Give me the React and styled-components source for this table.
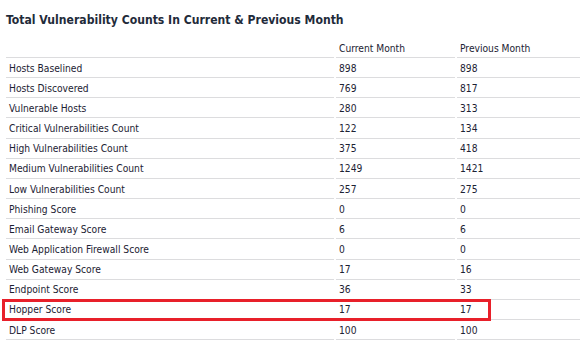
import styled, { createGlobalStyle } from "styled-components";

const rows = [
  ["Hosts Baselined", "898", "898"],
  ["Hosts Discovered", "769", "817"],
  ["Vulnerable Hosts", "280", "313"],
  ["Critical Vulnerabilities Count", "122", "134"],
  ["High Vulnerabilities Count", "375", "418"],
  ["Medium Vulnerabilities Count", "1249", "1421"],
  ["Low Vulnerabilities Count", "257", "275"],
  ["Phishing Score", "0", "0"],
  ["Email Gateway Score", "6", "6"],
  ["Web Application Firewall Score", "0", "0"],
  ["Web Gateway Score", "17", "16"],
  ["Endpoint Score", "36", "33"],
  ["Hopper Score", "17", "17"],
  ["DLP Score", "100", "100"],
];

const GlobalStyle = createGlobalStyle`
  body {
    margin: 0;
    background: #fff;
    font-family: "DejaVu Sans Condensed", "DejaVu Sans", sans-serif;
  }
`;

export default function App() {
  return (
    <>
      <GlobalStyle />
      <Page>
        <Title>Total Vulnerability Counts In Current &amp; Previous Month</Title>
        <TableWrap>
          <Table>
            <colgroup>
              <col style={{ width: 328 }} />
              <col style={{ width: 119 }} />
              <col />
            </colgroup>
            <thead>
              <tr>
                <HeadCell />
                <HeadCell>Current Month</HeadCell>
                <HeadCell>Previous Month</HeadCell>
              </tr>
            </thead>
            <tbody>
              {rows.map(([label, cur, prev]) => (
                <tr key={label}>
                  <Cell>{label}</Cell>
                  <Cell>{cur}</Cell>
                  <Cell>{prev}</Cell>
                </tr>
              ))}
            </tbody>
          </Table>
          {/* red annotation box around the Hopper Score row */}
          <Highlight />
        </TableWrap>
      </Page>
    </>
  );
}

const Page = styled.div`
  width: 580px;
  height: 350px;
  overflow: hidden;
`;

const Title = styled.h2`
  margin: 0;
  padding: 13px 0 0 6px;
  height: 25px;
  font-size: 12.1px;
  font-weight: bold;
  color: #1f2b3a;
`;

const TableWrap = styled.div`
  position: relative;
  padding-left: 4px;
`;

const Table = styled.table`
  width: 578px;
  border-collapse: separate;
  border-spacing: 2px 0;
  table-layout: fixed;
  font-size: 10.2px;
  color: #1c2233;
`;

const HeadCell = styled.th`
  height: 18px;
  padding: 1px 3px 0;
  text-align: left;
  font-weight: normal;
  vertical-align: middle;
  border-bottom: 1px solid #dcdcde;
`;

const Cell = styled.td`
  height: 18.16px;
  padding: 1px 3px 0;
  vertical-align: middle;
  border-bottom: 1px solid #dcdcde;
`;

const Highlight = styled.div`
  position: absolute;
  left: 2px;
  top: 261px;
  width: 483px;
  height: 16px;
  border: 3.5px solid #e8202a;
  pointer-events: none;
`;
